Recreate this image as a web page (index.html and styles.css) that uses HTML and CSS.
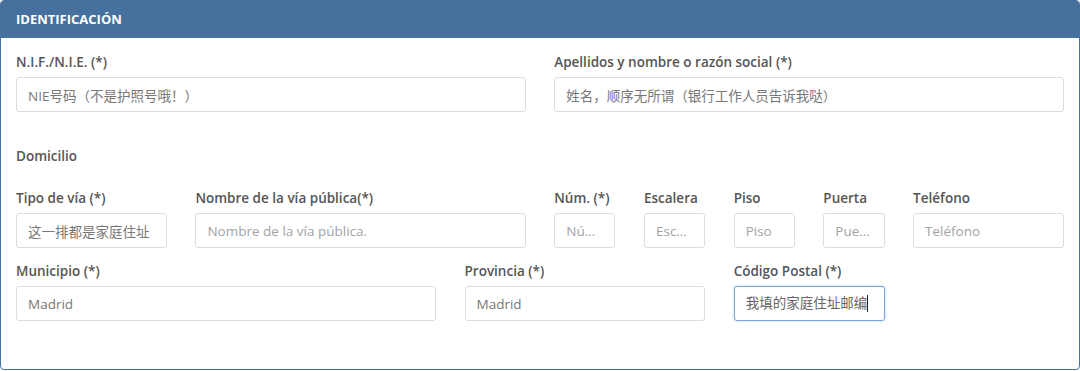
FILE: index.html
```html
<!DOCTYPE html>
<html lang="es">
<head>
  <meta charset="UTF-8">
  <meta name="viewport" content="width=device-width, initial-scale=1.0">
  <title>Identificación</title>
  <link rel="stylesheet" href="styles.css">
</head>
<body>
  <div class="panel">
    <div class="panel-heading">Identificación</div>
    <form class="panel-body" name="identificacion">
      <!-- Datos personales -->
      <div class="row">
        <div class="field span-6">
          <label for="nif">N.I.F./N.I.E. (*)</label>
          <input type="text" id="nif" value="NIE号码（不是护照号哦！）">
        </div>
        <div class="field span-6">
          <label for="nombre">Apellidos y nombre o razón social (*)</label>
          <input type="text" id="nombre" value="姓名，顺序无所谓（银行工作人员告诉我哒）">
        </div>
      </div>

      <h4 class="section-title">Domicilio</h4>

      <!-- Direccion -->
      <div class="row">
        <div class="field span-2">
          <label for="tipoVia">Tipo de vía (*)</label>
          <input type="text" id="tipoVia" value="这一排都是家庭住址">
        </div>
        <div class="field span-4">
          <label for="via">Nombre de la vía pública(*)</label>
          <input type="text" id="via" placeholder="Nombre de la vía pública.">
        </div>
        <div class="field span-1">
          <label for="num">Núm. (*)</label>
          <input type="text" id="num" placeholder="Número">
        </div>
        <div class="field span-1">
          <label for="escalera">Escalera</label>
          <input type="text" id="escalera" placeholder="Escalera">
        </div>
        <div class="field span-1">
          <label for="piso">Piso</label>
          <input type="text" id="piso" placeholder="Piso">
        </div>
        <div class="field span-1">
          <label for="puerta">Puerta</label>
          <input type="text" id="puerta" placeholder="Puerta">
        </div>
        <div class="field span-2">
          <label for="telefono">Teléfono</label>
          <input type="text" id="telefono" placeholder="Teléfono">
        </div>
      </div>

      <div class="row row-tight">
        <div class="field span-5">
          <label for="municipio">Municipio (*)</label>
          <input type="text" id="municipio" value="Madrid">
        </div>
        <div class="field span-3">
          <label for="provincia">Provincia (*)</label>
          <input type="text" id="provincia" value="Madrid">
        </div>
        <div class="field span-2">
          <label>Código Postal (*)</label>
          <div class="input focused">我填的家庭住址邮编<span class="caret"></span></div>
        </div>
      </div>
    </form>
  </div>
</body>
</html>
```

FILE: styles.css
```css
html {
  font: 13.5px/1.2 "Open Sans", "Noto Sans CJK SC", sans-serif;
}
body {
  margin: 0;
  padding: 0;
  background: #fff;
}
.panel {
  border: 1px solid #46709d;
  border-radius: 4px;
  overflow: hidden;
  height: 370px;
  box-sizing: border-box;
}
.panel-heading {
  background: #46709d;
  color: #fff;
  font-size: 13px;
  font-weight: 700;
  text-transform: uppercase;
  height: 37px;
  line-height: 37px;
  padding: 0 15px;
}
.panel-body {
  padding: 16px 15px 0 15px;
}
.row {
  display: grid;
  grid-template-columns: repeat(12, 1fr);
  column-gap: 28.5px;
}
.row-tight {
  margin-top: 15px;
}
.span-1 { grid-column: span 1; }
.span-2 { grid-column: span 2; }
.span-3 { grid-column: span 3; }
.span-4 { grid-column: span 4; }
.span-5 { grid-column: span 5; }
.span-6 { grid-column: span 6; }
.field {
  min-width: 0;
}
label {
  display: block;
  color: #555;
  font-weight: 600;
  line-height: 16px;
  margin-bottom: 7px;
  white-space: nowrap;
}
.section-title {
  margin: 36px 0 26px;
  font-size: 13.5px;
  line-height: 16px;
  color: #555;
  font-weight: 600;
}
input,
.input {
  display: block;
  width: 100%;
  box-sizing: border-box;
  height: 35px;
  padding: 0 11px;
  border: 1px solid #ddd;
  border-radius: 3px;
  font: inherit;
  color: #777;
  background: #fff;
  text-overflow: ellipsis;
  text-spacing-trim: space-all;
  outline: none;
}
input::placeholder {
  color: #a3a3a3;
}
.input {
  line-height: 33px;
  white-space: nowrap;
  overflow: hidden;
}
.focused {
  border-color: #79a6d6;
  box-shadow: 0 0 3px rgba(102, 160, 220, 0.45);
  color: #666;
}
.caret {
  display: inline-block;
  width: 1px;
  height: 17px;
  background: #222;
  vertical-align: -4px;
}
```
